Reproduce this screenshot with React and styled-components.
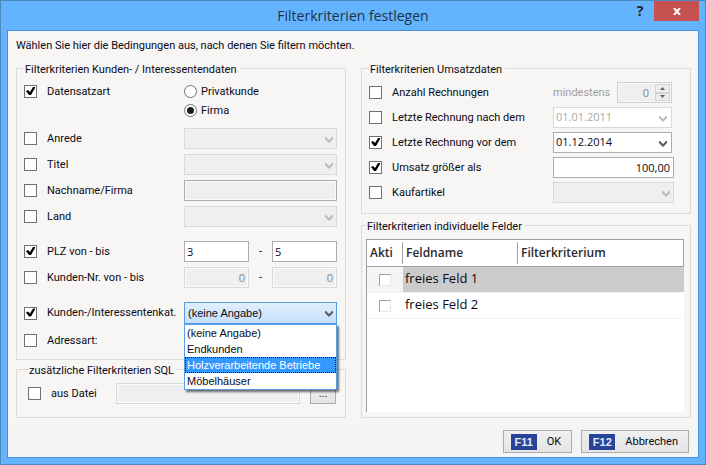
import { useState } from "react";
import styled, { createGlobalStyle, css } from "styled-components";

//#region Styles
const GlobalStyle = createGlobalStyle`
	*,
	*::before,
	*::after {
		box-sizing: border-box;
	}

	body {
		margin: 0;
		font-family: Roboto, "Liberation Sans", sans-serif;
		font-size: 11px;
		line-height: 14px;
		color: #0a0a14;
	}

	input,
	select,
	button {
		margin: 0;
		font: inherit;
		color: inherit;
	}
`;

const Window = styled.div`
	display: flex;
	flex-direction: column;
	min-height: 100vh;
	padding: 0 6px 6px;
	border: 1px solid #4c88c0;
	background: #64b3ff;
`;

const TitleBar = styled.header`
	display: grid;
	grid-template-columns: 1fr auto 1fr;
	align-items: start;
	height: 29px;
`;

const Title = styled.h1`
	grid-column: 2;
	margin: 0;
	font-family: "Open Sans", "Noto Sans", sans-serif;
	font-size: 14px;
	font-weight: 400;
	line-height: 30px;
	color: #1f3347;
`;

const TitleButtons = styled.div`
	display: flex;
	justify-content: flex-end;
`;

const HelpButton = styled.button`
	width: 28px;
	height: 20px;
	padding: 0;
	border: 0;
	background: none;
	font-family: "Open Sans", "Noto Sans", sans-serif;
	font-size: 14px;
	font-weight: 700;
	line-height: 20px;
	color: #1c2530;
`;

const CloseButton = styled.button`
	display: flex;
	align-items: center;
	justify-content: center;
	width: 45px;
	height: 20px;
	padding: 0;
	border: 0;
	background: #c75050;
`;

const Client = styled.div`
	display: flex;
	flex: 1;
	flex-direction: column;
	border: 1px solid #4690da;
	background: #f3f4f6;
`;

const Main = styled.main`
	display: flex;
	flex: 1;
	flex-direction: column;
	padding: 7px 7px 8px 8px;
	background: #f7f6f5;
`;

const Intro = styled.p`
	margin: 0 0 6px;
	line-height: 16px;
`;

const Columns = styled.div`
	display: grid;
	flex: 1;
	grid-template-columns: 1fr 1fr;
	gap: 15px;
`;

const Column = styled.div`
	display: flex;
	flex-direction: column;
	gap: ${(p) => p.$gap}px;
	min-width: 0;
`;

const Group = styled.fieldset`
	flex: ${(p) => (p.$grow ? 1 : "none")};
	min-width: 0;
	margin: 0;
	padding: ${(p) => p.$padding};
	border: 1px solid #dcdcdc;
	${(p) =>
		p.$grow &&
		css`
			display: flex;
			flex-direction: column;
		`}
`;

const Legend = styled.legend`
	padding: 3px 3px 0 1px;
	line-height: 14px;
	white-space: nowrap;
`;

const Row = styled.div`
	display: grid;
	grid-template-columns: 13px ${(p) => p.$label}px 1fr;
	column-gap: 10px;
	align-items: center;
	min-height: 21px;
	margin-top: ${(p) => p.$gap || 0}px;

	&.top {
		align-items: start;
		line-height: 19px;
	}
`;

const Label = styled.label`
	white-space: nowrap;
	color: ${(p) => (p.$muted ? "#a0a0a0" : "inherit")};
`;

const Check = styled.input.attrs({ type: "checkbox" })`
	display: block;
	appearance: none;
	width: 13px;
	height: 13px;
	border: 1px solid #707070;
	background: #fff;

	&:checked::after {
		content: "";
		display: block;
		height: 11px;
		background: #000;
		clip-path: polygon(1px 5px, 3px 4px, 5px 6px, 8px 1px, 10px 1px, 10px 2px, 6px 9px, 4px 9px);
	}

	.top > & {
		margin-top: 3px;
	}
`;

const CellCheck = styled(Check)`
	margin: 0 auto;
	width: 12px;
	height: 12px;
	border-color: #a0a0a0 #e8e8e8 #e8e8e8 #a0a0a0;
`;

const RadioList = styled.div`
	display: grid;
`;

const RadioLabel = styled.label`
	display: flex;
	align-items: center;
	gap: 4px;
	height: 19px;
`;

const Radio = styled.input.attrs({ type: "radio" })`
	appearance: none;
	display: grid;
	place-items: center;
	width: 13px;
	height: 13px;
	border: 1px solid #707070;
	border-radius: 50%;
	background: #fff;

	&:checked::after {
		content: "";
		width: 7px;
		height: 7px;
		border-radius: 50%;
		background: #1c1c1c;
	}
`;

const TextBox = styled.input.attrs({ type: "text" })`
	width: 100%;
	min-width: 0;
	height: 21px;
	padding: 0 3px 1px 2px;
	border: 1px solid #abadb3;
	border-radius: 0;
	background: #fff;
	font-family: "Open Sans", "Noto Sans", sans-serif;
	text-align: ${(p) => p.$align || "left"};

	&:disabled {
		border-color: ${(p) => (p.$strong ? "#abadb3" : "#d9d9d9")};
		background: #efefef;
		box-shadow: inset 0 0 0 1px #fbfbfb;
		color: #858585;
	}
`;

const Range = styled.div`
	display: grid;
	grid-template-columns: 1fr 23px 1fr;
	align-items: center;
	text-align: center;
`;

const SelectBox = styled.div`
	position: relative;
	margin-right: ${(p) => (p.$inset ? 2 : 0)}px;

	svg {
		position: absolute;
		top: 8px;
		right: ${(p) => (p.$inset ? 5 : 4)}px;
		pointer-events: none;
	}
`;

const StyledSelect = styled.select`
	display: block;
	appearance: none;
	width: 100%;
	height: 21px;
	padding: 0 20px 1px 2px;
	border: 1px solid #abadb3;
	border-radius: 0;
	background: #fff;
	font-family: "Open Sans", "Noto Sans", sans-serif;

	&:disabled {
		border-color: #d9d9d9;
		background: ${(p) => (p.$white ? "#fff" : "#efefef")};
		color: #a8a8a8;
		opacity: 1;
	}

	&.open {
		height: 22px;
		padding-left: 3px;
		border-color: #569de5;
		background: linear-gradient(#e1effc, #c4e0fb);
		font-family: "Liberation Sans", Arial, sans-serif;
	}
`;

const Options = styled.ul`
	position: absolute;
	z-index: 1;
	top: 100%;
	left: 0;
	right: 0;
	margin: 0;
	padding: 0;
	list-style: none;
	border: 1px solid #569de5;
	background: #fff;
	box-shadow: 2px 2px 2px rgba(0, 0, 0, 0.55);
	font-family: "Liberation Sans", Arial, sans-serif;
`;

const Option = styled.li`
	height: 16px;
	padding: 0 1px;
	border: 1px solid transparent;
	line-height: 14px;
	white-space: nowrap;

	&[aria-selected="true"] {
		border: 1px dotted #1c1c1c;
		background: #3399ff;
		color: #fff;
	}
`;

const CountField = styled.div`
	display: flex;
	align-items: center;
	justify-content: space-between;
	margin-right: 2px;
`;

const Spinner = styled.div`
	display: flex;
	width: 55px;
	height: 21px;
	padding: 1px;
	border: 1px solid #d0d0d0;
	background: #f7f7f7;
`;

const SpinnerInput = styled.input`
	flex: 1;
	width: 0;
	padding: 0 6px 0 0;
	border: 0;
	background: #efefef;
	font-family: "Open Sans", "Noto Sans", sans-serif;
	text-align: right;
	color: #858585;
`;

const SpinnerButtons = styled.div`
	display: grid;
	grid-template-rows: 1fr 1fr;
	width: 15px;
`;

const SpinnerButton = styled.button`
	display: grid;
	place-items: center;
	min-height: 0;
	padding: 0;
	border: 1px solid #d4d4d4;
	background: #ececec;
`;

const FileRow = styled.div`
	display: grid;
	grid-template-columns: 13px 55px 1fr 26px;
	column-gap: 10px;
	align-items: center;
`;

const PushButton = styled.button`
	display: flex;
	align-items: center;
	justify-content: center;
	gap: 10px;
	height: ${(p) => (p.$small ? 21 : 23)}px;
	padding: ${(p) => (p.$small ? "0" : "0 10px 0 7px")};
	border: 1px solid #acacac;
	background: linear-gradient(#f0f0f0, #e4e4e4);
`;

const KeyBadge = styled.kbd`
	width: 26px;
	background: #27449a;
	font-family: "Liberation Sans", Arial, sans-serif;
	font-size: 11px;
	font-weight: 700;
	line-height: 16px;
	color: #e4e9f6;
`;

const TablePane = styled.div`
	flex: 1;
	border-left: 1px solid #a0a0a0;
	background: #fff;
`;

const Table = styled.table`
	width: 100%;
	table-layout: fixed;
	border-collapse: separate;
	border-spacing: 0;
	font-family: "Open Sans", "Noto Sans", sans-serif;
	font-size: 12px;
	line-height: 18px;

	th {
		height: 27px;
		padding: 2px 0;
		border-top: 1px solid #a0a0a0;
		border-bottom: 1px solid #a0a0a0;
		text-align: left;
		font-weight: 600;
		color: #2a2a2a;
	}

	th:last-child {
		border-right: 1px solid #a0a0a0;
	}

	th span {
		display: block;
		padding-left: 3px;
		line-height: 22px;
	}

	th:not(:last-child) span {
		border-right: 1px solid #a0a0a0;
	}

	td {
		height: 26px;
		padding: 0 0 3px 2px;
		border-bottom: 1px solid #f3f3f3;
		font-size: 13px;
	}

	td:first-child {
		padding: 0;
	}

	tr.current td {
		background: #cbcbcb;
	}

	tr.current td:first-child {
		background: #f3f4f6;
	}
`;

const Footer = styled.footer`
	display: flex;
	justify-content: flex-end;
	gap: 9px;
	padding: 4px 9px;
`;
//#endregion

const Chevron = ({ color = "#5a5a5a" }) => (
	<svg width="8" height="7" viewBox="0 0 8 7" aria-hidden="true">
		<path d="M0 1h1l3 3 3-3h1v2L4 7 0 3z" fill={color} />
	</svg>
);

const Select = ({ label, value, disabled, white, inset }) => (
	<SelectBox $inset={inset}>
		<StyledSelect aria-label={label} disabled={disabled} $white={white}>
			<option>{value}</option>
		</StyledSelect>
		<Chevron color={disabled ? "#bcbcbc" : undefined} />
	</SelectBox>
);

const Field = ({ id, label, checked, wide, gap, className, children }) => (
	<Row $label={wide ? 151 : 127} $gap={gap} className={className}>
		<Check id={id} defaultChecked={checked} />
		<Label htmlFor={id}>{label}</Label>
		{children}
	</Row>
);

const categories = ["(keine Angabe)", "Endkunden", "Holzverarbeitende Betriebe", "Möbelhäuser"];

function CategorySelect() {
	const [open, setOpen] = useState(true);
	const [value, setValue] = useState(categories[0]);
	const [active, setActive] = useState(categories[2]);

	const choose = (category) => {
		setValue(category);
		setOpen(false);
	};

	return (
		<SelectBox>
			<StyledSelect
				className="open"
				aria-label="Kunden-/Interessentenkategorie"
				value={value}
				onMouseDown={(e) => {
					// The list is drawn below, so keep the native one closed
					e.preventDefault();
					setOpen(!open);
				}}
				onChange={(e) => setValue(e.target.value)}
			>
				{categories.map((category) => (
					<option key={category}>{category}</option>
				))}
			</StyledSelect>
			<Chevron />
			{open && (
				<Options role="listbox">
					{categories.map((category) => (
						<Option
							key={category}
							role="option"
							aria-selected={category === active}
							onMouseEnter={() => setActive(category)}
							onClick={() => choose(category)}
						>
							{category}
						</Option>
					))}
				</Options>
			)}
		</SelectBox>
	);
}

function CustomerFilters() {
	return (
		<Group $padding="5px 8px 8px 7px">
			<Legend>Filterkriterien Kunden- / Interessentendaten</Legend>
			<Field id="datensatzart" label="Datensatzart" checked className="top">
				<RadioList>
					<RadioLabel>
						<Radio name="art" /> Privatkunde
					</RadioLabel>
					<RadioLabel>
						<Radio name="art" defaultChecked /> Firma
					</RadioLabel>
				</RadioList>
			</Field>
			<Field id="anrede" label="Anrede" gap={8}>
				<Select label="Anrede" disabled />
			</Field>
			<Field id="titel" label="Titel" gap={5}>
				<Select label="Titel" disabled />
			</Field>
			<Field id="nachname" label="Nachname/Firma" gap={5}>
				<TextBox aria-label="Nachname/Firma" disabled $strong />
			</Field>
			<Field id="land" label="Land" gap={5}>
				<Select label="Land" disabled />
			</Field>
			<Field id="plz" label="PLZ von - bis" checked gap={14}>
				<Range>
					<TextBox aria-label="PLZ von" defaultValue="3" />
					-
					<TextBox aria-label="PLZ bis" defaultValue="5" />
				</Range>
			</Field>
			<Field id="kundennr" label="Kunden-Nr. von - bis" gap={5}>
				<Range>
					<TextBox aria-label="Kunden-Nr. von" defaultValue="0" disabled $align="right" />
					-
					<TextBox aria-label="Kunden-Nr. bis" defaultValue="0" disabled $align="right" />
				</Range>
			</Field>
			<Field id="kategorie" label="Kunden-/Interessentenkat." checked gap={14}>
				<CategorySelect />
			</Field>
			<Field id="adressart" label="Adressart:" gap={6}>
				<Select label="Adressart" disabled />
			</Field>
		</Group>
	);
}

function SalesFilters() {
	return (
		<Group $padding="5px 16px 10px 7px">
			<Legend>Filterkriterien Umsatzdaten</Legend>
			<Field id="anzahl" label="Anzahl Rechnungen" wide>
				<CountField>
					<Label htmlFor="mindestens" $muted>
						mindestens
					</Label>
					<Spinner>
						<SpinnerInput id="mindestens" type="text" defaultValue="0" disabled />
						<SpinnerButtons>
							<SpinnerButton aria-label="Mehr" disabled>
								<svg width="5" height="3" viewBox="0 0 5 3">
									<path d="M0 3 2.500 0 5 3z" fill="#606060" />
								</svg>
							</SpinnerButton>
							<SpinnerButton aria-label="Weniger" disabled>
								<svg width="5" height="3" viewBox="0 0 5 3">
									<path d="M0 0h5L2.500 3z" fill="#606060" />
								</svg>
							</SpinnerButton>
						</SpinnerButtons>
					</Spinner>
				</CountField>
			</Field>
			<Field id="nach" label="Letzte Rechnung nach dem" wide gap={4}>
				<Select label="Letzte Rechnung nach dem" value="01.01.2011" disabled white inset />
			</Field>
			<Field id="vor" label="Letzte Rechnung vor dem" checked wide gap={4}>
				<Select label="Letzte Rechnung vor dem" value="01.12.2014" inset />
			</Field>
			<Field id="umsatz" label="Umsatz größer als" checked wide gap={4}>
				<TextBox aria-label="Umsatz größer als" defaultValue="100,00" $align="right" />
			</Field>
			<Field id="kaufartikel" label="Kaufartikel" wide gap={4}>
				<Select label="Kaufartikel" disabled />
			</Field>
		</Group>
	);
}

function CustomFields() {
	return (
		<Group $padding="5px 6px 5px 4px" $grow>
			<Legend>Filterkriterien individuelle Felder</Legend>
			<TablePane>
				<Table>
					<colgroup>
						<col style={{ width: 36 }} />
						<col style={{ width: 115 }} />
						<col />
					</colgroup>
					<thead>
						<tr>
							<th>
								<span>Akti</span>
							</th>
							<th>
								<span>Feldname</span>
							</th>
							<th>
								<span>Filterkriterium</span>
							</th>
						</tr>
					</thead>
					<tbody>
						{["freies Feld 1", "freies Feld 2"].map((name, i) => (
							<tr key={name} className={i === 0 ? "current" : undefined}>
								<td>
									<CellCheck aria-label={name} />
								</td>
								<td>{name}</td>
								<td />
							</tr>
						))}
					</tbody>
				</Table>
			</TablePane>
		</Group>
	);
}

function App() {
	return (
		<Window>
			<GlobalStyle />
			<TitleBar>
				<Title>Filterkriterien festlegen</Title>
				<TitleButtons>
					<HelpButton>?</HelpButton>
					<CloseButton aria-label="Schließen">
						<svg width="8" height="7" viewBox="0 0 8 7">
							<path d="M1 0l6 7M7 0L1 7" stroke="#fff" strokeWidth="2" />
						</svg>
					</CloseButton>
				</TitleButtons>
			</TitleBar>
			<Client>
				<Main>
					<Intro>Wählen Sie hier die Bedingungen aus, nach denen Sie filtern möchten.</Intro>
					<Columns>
						<Column $gap={1}>
							<CustomerFilters />
							<Group $padding="5px 9px 13px 11px">
								<Legend>zusätzliche Filterkriterien SQL</Legend>
								<FileRow>
									<Check id="datei" />
									<Label htmlFor="datei">aus Datei</Label>
									<TextBox aria-label="Datei" disabled />
									<PushButton $small aria-label="Datei auswählen">
										...
									</PushButton>
								</FileRow>
							</Group>
						</Column>
						<Column $gap={3}>
							<SalesFilters />
							<CustomFields />
						</Column>
					</Columns>
				</Main>
				<Footer>
					<PushButton>
						<KeyBadge>F11</KeyBadge>
						OK
					</PushButton>
					<PushButton>
						<KeyBadge>F12</KeyBadge>
						Abbrechen
					</PushButton>
				</Footer>
			</Client>
		</Window>
	);
}

export default App;
